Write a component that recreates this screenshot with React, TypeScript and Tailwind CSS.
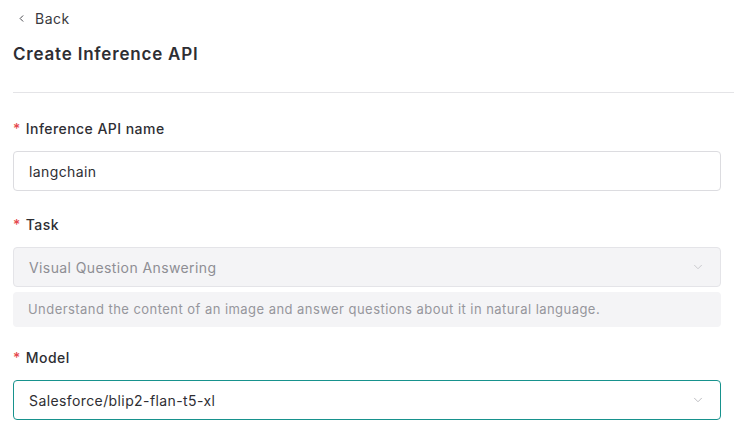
import { ChevronDown, ChevronLeft } from "lucide-react";

const font = { fontFamily: "Inter, 'Noto Sans', sans-serif" };

function Label({ text }: { text: string }) {
  return (
    <div className="flex items-center gap-[5px] text-[14px] font-medium text-[#2e2e33] leading-5 tracking-[0.45px]">
      <span className="text-[#e5484d] text-[14px]">*</span>
      <span>{text}</span>
    </div>
  );
}

export default function App() {
  return (
    <div className="w-[734px] h-[440px] bg-white overflow-hidden" style={font}>
      <div className="px-[13px]">
        <div className="flex items-center gap-[8px] pt-[8px] h-[20px] text-[14px] text-[#3a3a40] tracking-[0.5px] box-content">
          <ChevronLeft className="w-[11px] h-[11px] ml-[3px]" strokeWidth={2} />
          <span>Back</span>
        </div>
        <h1 className="mt-[14px] text-[17px] font-semibold text-[#2e2e33] leading-6 tracking-[0.8px]">Create Inference API</h1>
      </div>
      <div className="ml-[13px] mt-[26px] h-px bg-[#e4e4e7]" />

      <div className="px-[13px] pt-[26px]">
        <Label text="Inference API name" />
        <div className="mt-[12px] h-[40px] rounded border border-[#dcdce0] flex items-center px-[15px] text-[14px] text-[#2e2e33] tracking-[0.4px]">
          langchain
        </div>

        <div className="mt-[24px]">
          <Label text="Task" />
        </div>
        <div className="mt-[12px] h-[40px] rounded border border-[#e4e4e8] bg-[#f4f4f6] flex items-center justify-between px-[15px] text-[14px] text-[#8e8e94] tracking-[0.4px]">
          <span>Visual Question Answering</span>
          <ChevronDown className="w-[14px] h-[14px] text-[#c4c4c8]" strokeWidth={1.5} />
        </div>
        <div className="mt-[5px] h-[35px] rounded bg-[#f4f4f6] flex items-center px-[15px] text-[13px] text-[#96969c] tracking-[0.45px]">
          Understand the content of an image and answer questions about it in natural language.
        </div>

        <div className="mt-[21px]">
          <Label text="Model" />
        </div>
        <div className="mt-[12px] h-[40px] rounded border-[1.5px] border-[#17928d] flex items-center justify-between px-[15px] text-[14px] text-[#2e2e33] tracking-[0.4px]">
          <span>Salesforce/blip2-flan-t5-xl</span>
          <ChevronDown className="w-[14px] h-[14px] text-[#b4b4b8]" strokeWidth={1.5} />
        </div>
      </div>
    </div>
  );
}
